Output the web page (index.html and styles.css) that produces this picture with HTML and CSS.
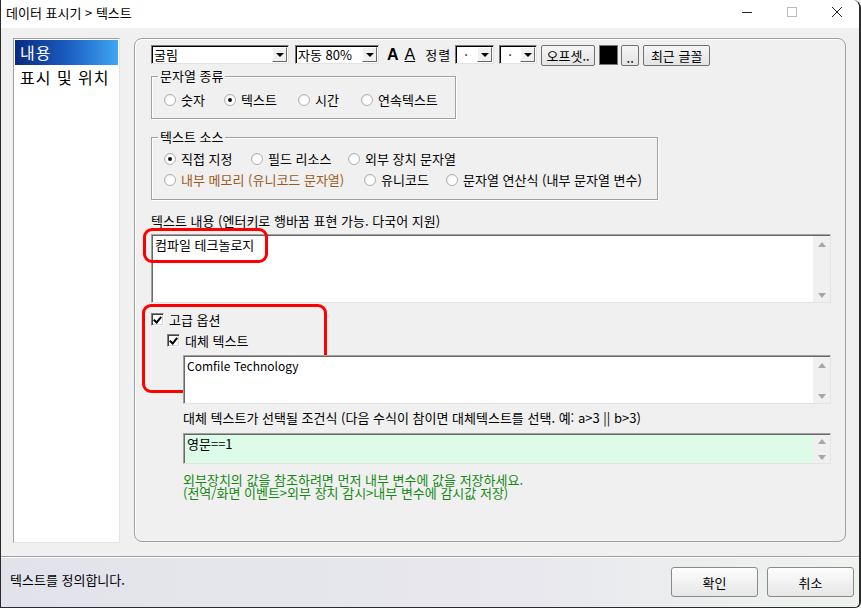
FILE: index.html
```html
<!DOCTYPE html>
<html lang="ko">
<head>
    <meta charset="UTF-8">
    <title>데이터 표시기 > 텍스트</title>
    <link rel="stylesheet" href="styles.css">
</head>
<body>
<div class="window">
    <div class="titlebar">
        <span class="title">데이터 표시기 &gt; 텍스트</span>
        <div class="caption-buttons">
            <span class="cap cap-min"><svg width="12" height="12" viewBox="0 0 12 12"><path d="M1 6.5h10" stroke="#222" stroke-width="1"/></svg></span>
            <span class="cap cap-max"><svg width="12" height="12" viewBox="0 0 12 12"><rect x="1.5" y="1.5" width="9" height="9" fill="none" stroke="#bbb"/></svg></span>
            <span class="cap cap-close"><svg width="12" height="12" viewBox="0 0 12 12"><path d="M1 1l10 10M11 1L1 11" stroke="#222" stroke-width="1"/></svg></span>
        </div>
    </div>

    <div class="content">
        <ul class="nav-list">
            <li class="selected">내용</li>
            <li>표시 및 위치</li>
        </ul>

        <div class="panel">
            <div class="toolbar">
                <div class="combo font-combo"><span class="combo-text">굴림</span><span class="drop"></span></div>
                <div class="combo size-combo"><span class="combo-text">자동 80%</span><span class="drop"></span></div>
                <span class="font-btn bold">A</span>
                <span class="font-btn under">A</span>
                <span class="align-label">정렬</span>
                <div class="combo small-combo"><span class="combo-text">·</span><span class="drop"></span></div>
                <div class="combo small-combo"><span class="combo-text">·</span><span class="drop"></span></div>
                <button class="btn btn-offset">오프셋..</button>
                <span class="color-swatch"></span>
                <button class="btn btn-dots">..</button>
                <button class="btn btn-recent">최근 글꼴</button>
            </div>

            <fieldset class="group group-type">
                <legend>문자열 종류</legend>
                <div class="radio-row">
                    <label class="radio"><span class="dot"></span>숫자</label>
                    <label class="radio"><span class="dot on"></span>텍스트</label>
                    <label class="radio"><span class="dot"></span>시간</label>
                    <label class="radio"><span class="dot"></span>연속텍스트</label>
                </div>
            </fieldset>

            <fieldset class="group group-source">
                <legend>텍스트 소스</legend>
                <div class="radio-row row-a">
                    <label class="radio"><span class="dot on"></span>직접 지정</label>
                    <label class="radio"><span class="dot"></span>필드 리소스</label>
                    <label class="radio"><span class="dot"></span>외부 장치 문자열</label>
                </div>
                <div class="radio-row row-b">
                    <label class="radio memory"><span class="dot"></span>내부 메모리 (유니코드 문자열)</label>
                    <label class="radio"><span class="dot"></span>유니코드</label>
                    <label class="radio"><span class="dot"></span>문자열 연산식 (내부 문자열 변수)</label>
                </div>
            </fieldset>

            <div class="field-label">텍스트 내용 (엔터키로 행바꿈 표현 가능. 다국어 지원)</div>
            <div class="edit edit-main">
                <div class="edit-text">컴파일 테크놀로지</div>
                <div class="scroll"><span class="up"></span><span class="down"></span></div>
                <span class="mark mark-main"></span>
            </div>

            <div class="advanced">
                <span class="mark mark-adv"></span>
                <label class="check"><span class="box"></span>고급 옵션</label>
                <div class="advanced-body">
                    <label class="check"><span class="box"></span>대체 텍스트</label>
                    <div class="edit edit-alt">
                        <div class="edit-text latin">Comfile Technology</div>
                        <div class="scroll"><span class="up"></span><span class="down"></span></div>
                    </div>
                    <div class="field-label cond-label">대체 텍스트가 선택될 조건식 (다음 수식이 참이면 대체텍스트를 선택. 예: a&gt;3 || b&gt;3)</div>
                    <div class="edit edit-cond">
                        <div class="edit-text">영문==1</div>
                        <div class="scroll"><span class="up"></span><span class="down"></span></div>
                    </div>
                    <div class="hint">
                        <div>외부장치의 값을 참조하려면 먼저 내부 변수에 값을 저장하세요.</div>
                        <div>(전역/화면 이벤트&gt;외부 장치 감시&gt;내부 변수에 감시값 저장)</div>
                    </div>
                </div>
            </div>
        </div>
    </div>

    <div class="statusbar">
        <span class="status-text">텍스트를 정의합니다.</span>
        <div class="dialog-buttons">
            <button class="btn btn-dialog">확인</button>
            <button class="btn btn-dialog">취소</button>
        </div>
    </div>
</div>
</body>
</html>
```

FILE: styles.css
```css
* {
    box-sizing: border-box;
}
body {
    margin: 0;
    background: #f0f0f0;
    font-family: "Noto Sans CJK KR", "Liberation Sans", sans-serif;
    font-size: 13px;
    color: #000;
}
.window {
    width: 861px;
    height: 608px;
    background: #f0f0f0;
    border: 1px solid #2b2b2b;
    border-top: none;
    border-right-width: 2px;
    border-bottom-width: 1px;
    border-top-right-radius: 8px;
    border-bottom-right-radius: 6px;
    overflow: hidden;
    display: flex;
    flex-direction: column;
}
.titlebar {
    height: 28px;
    background: #fff;
    display: flex;
    align-items: center;
    justify-content: space-between;
    padding-left: 5px;
}
.title {
    font-size: 13px;
    line-height: 1;
    margin-top: -4px;
}
.caption-buttons {
    display: flex;
    height: 100%;
    margin-top: -4px;
}
.cap {
    width: 45px;
    display: flex;
    align-items: center;
    justify-content: center;
}
.content {
    flex: 1;
    display: flex;
    padding: 10px 0 0 12px;
    gap: 14px;
}
.nav-list {
    list-style: none;
    margin: 0;
    padding: 1px;
    width: 107px;
    height: 505px;
    background: #fff;
    border: 1px solid;
    border-color: #a0a0a0 #e3e3e3 #e3e3e3 #a0a0a0;
}
.nav-list li {
    height: 25px;
    line-height: 25px;
    font-size: 16px;
    padding-left: 5px;
    letter-spacing: 1px;
}
.nav-list li.selected {
    color: #fff;
    background: linear-gradient(to right, #0a2a80 0%, #1a5bc0 50%, #3ea6f2 100%);
}
.panel {
    width: 712px;
    height: 504px;
    border: 1px solid #a0a0a0;
    border-radius: 8px;
    box-shadow: inset 1px 1px #fff;
    padding: 6px 0 0 16px;
    display: flex;
    flex-direction: column;
    align-items: flex-start;
}
.toolbar {
    display: flex;
    align-items: flex-start;
    height: 21px;
}
.combo {
    height: 19px;
    background: #fff;
    border: 1px solid;
    border-color: #7a7a7a #e3e3e3 #e3e3e3 #7a7a7a;
    box-shadow: inset 1px 1px #000;
    display: flex;
    justify-content: space-between;
    padding: 1px 1px 1px 2px;
}
.combo-text {
    line-height: 15px;
}
.drop {
    width: 15px;
    height: 15px;
    background: #f0f0f0;
    border: 1px solid;
    border-color: #fff #696969 #696969 #fff;
    position: relative;
}
.drop::after {
    content: "";
    position: absolute;
    left: 3px;
    top: 5px;
    border-left: 4px solid transparent;
    border-right: 4px solid transparent;
    border-top: 4px solid #000;
}
.font-combo {
    width: 138px;
}
.size-combo {
    width: 84px;
    margin-left: 6px;
}
.small-combo {
    width: 38px;
    margin-left: 5px;
}
.small-combo .combo-text {
    padding-left: 6px;
}
.align-label + .small-combo {
    width: 39px;
    margin-left: 4px;
}
.font-btn {
    font-family: "Liberation Sans", sans-serif;
    font-size: 16px;
    line-height: 19px;
    margin-left: 8px;
}
.font-btn.bold {
    font-weight: bold;
}
.font-btn.under {
    margin-left: 6px;
    text-decoration: underline;
    text-underline-offset: 1px;
}
.align-label {
    line-height: 19px;
    margin-left: 10px;
    letter-spacing: 1px;
}
.btn {
    font-family: inherit;
    font-size: 13px;
    height: 21px;
    padding: 0;
    background: linear-gradient(#f6f6f6, #e3e3e3);
    border: 1px solid #707070;
    border-radius: 2px;
    color: #000;
}
.btn-offset {
    width: 54px;
    margin-left: 4px;
}
.color-swatch {
    width: 19px;
    height: 20px;
    background: #000;
    border: 1px solid #777;
    margin-left: 4px;
}
.btn-dots {
    width: 18px;
    margin-left: 3px;
    line-height: 24px;
}
.btn-recent {
    width: 67px;
    margin-left: 4px;
}
.group {
    padding: 0 0 0 12px;
    border: 1px solid #a0a0a0;
    box-shadow: 1px 1px #fff, inset 1px 1px #fff;
    min-width: 0;
}
.group legend {
    padding: 0 2px;
    margin-left: -6px;
    line-height: 14px;
}
.group-type {
    width: 305px;
    height: 50px;
    margin: 3px 0 0 0;
}
.group-source {
    width: 507px;
    height: 70px;
    margin: 11px 0 0 0;
}
.radio-row {
    display: grid;
    height: 21px;
    align-items: center;
}
.group-type .radio-row {
    grid-template-columns: 60px 74px 63px auto;
    margin-top: 6px;
}
.row-a {
    grid-template-columns: 87px 97px auto;
    margin-top: 4px;
}
.row-b {
    grid-template-columns: 200px 82px auto;
}
.radio {
    display: flex;
    align-items: center;
    white-space: nowrap;
}
.radio.memory {
    color: #9a5a1e;
}
.dot {
    width: 12px;
    height: 12px;
    border-radius: 50%;
    border: 1px solid #b0b0b0;
    background: radial-gradient(circle at 60% 60%, #fff 45%, #dcdcdc 100%);
    margin-right: 5px;
    position: relative;
}
.dot.on::after {
    content: "";
    position: absolute;
    left: 3px;
    top: 3px;
    width: 4px;
    height: 4px;
    border-radius: 50%;
    background: #111;
}
.field-label {
    margin-top: 13px;
    line-height: 16px;
}
.edit {
    display: flex;
    background: #fff;
    border: 1px solid;
    border-color: #a0a0a0 #e3e3e3 #e3e3e3 #a0a0a0;
    box-shadow: inset 1px 1px #696969;
    position: relative;
}
.edit-text {
    flex: 1;
    padding: 2px 0 0 3px;
    line-height: 15px;
}
.edit-text.latin {
    font-size: 12px;
}
.scroll {
    width: 17px;
    background: #f0f0f0;
    display: flex;
    flex-direction: column;
    justify-content: space-between;
    align-items: center;
    padding: 6px 0 4px;
    margin: 1px 0 0 0;
}
.up, .down {
    border-left: 4px solid transparent;
    border-right: 4px solid transparent;
}
.up {
    border-bottom: 5px solid #a6a6a6;
}
.down {
    border-top: 5px solid #a6a6a6;
}
.edit-main {
    width: 680px;
    height: 69px;
    margin-top: 5px;
}
.advanced {
    position: relative;
    margin-top: 8px;
}
.check {
    display: flex;
    align-items: center;
    height: 16px;
}
.box {
    width: 13px;
    height: 13px;
    background: #fff;
    border: 1px solid;
    border-color: #808080 #fff #fff #808080;
    box-shadow: inset 1px 1px #404040, inset -1px -1px #d4d4d0;
    margin-right: 5px;
    position: relative;
}
.box::after {
    content: "";
    position: absolute;
    left: 3px;
    top: 1px;
    width: 3px;
    height: 6px;
    border: solid #000;
    border-width: 0 2px 2px 0;
    transform: rotate(40deg);
}
.advanced-body {
    padding-left: 16px;
    margin-top: 5px;
}
.edit-alt {
    width: 648px;
    height: 49px;
    margin: 7px 0 0 16px;
}
.cond-label {
    margin: 6px 0 0 16px;
}
.edit-cond {
    width: 648px;
    height: 31px;
    margin: 7px 0 0 16px;
    background: #dcfce8;
}
.edit-cond .scroll {
    padding: 4px 0 3px;
}
.hint {
    margin: 9px 0 0 16px;
    color: #128a12;
    line-height: 13px;
}
.mark {
    position: absolute;
    border: 3px solid #f00;
    border-radius: 9px;
    pointer-events: none;
}
.mark-main {
    left: -9px;
    top: -7px;
    width: 125px;
    height: 35px;
}
.mark-adv {
    left: -9px;
    top: -7px;
    width: 185px;
    height: 89px;
}
.statusbar {
    height: 51px;
    border-top: 1px solid #a0a0a0;
    box-shadow: inset 0 1px #fff;
    background: linear-gradient(to right, #e2e2ea 0%, #e8e8ee 60%, #eef3ee 100%);
    display: flex;
    justify-content: space-between;
    padding: 10px 5px 0 9px;
}
.status-text {
    line-height: 26px;
}
.dialog-buttons {
    display: flex;
    gap: 9px;
}
.btn-dialog {
    width: 87px;
    height: 30px;
    background: linear-gradient(#fdfdfd, #e6e6e6);
    border-color: #8a8a8a;
    border-radius: 3px;
}
```
